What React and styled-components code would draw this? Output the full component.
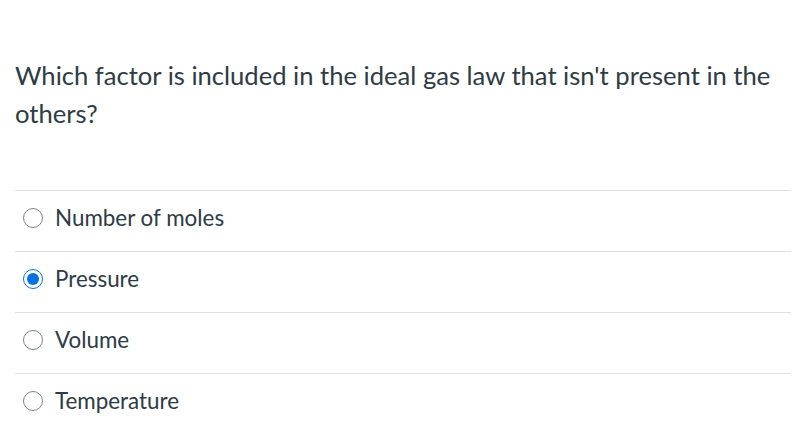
import React from "react";
import styled, { createGlobalStyle } from "styled-components";

const GlobalStyle = createGlobalStyle`
  body {
    margin: 0;
    background: #ffffff;
    font-family: Lato, "Noto Sans", sans-serif;
    color: #2d3b45;
  }
`;

const Page = styled.div`
  padding: 56px 12px 0 15px;
`;

const Question = styled.div`
  font-size: 25.6px;
  line-height: 38px;
  color: #2d3b45;
  padding-right: 10px;
  margin-bottom: 58px;
`;

const Answers = styled.div`
  display: flex;
  flex-direction: column;
`;

const Row = styled.label`
  box-sizing: border-box;
  display: flex;
  align-items: center;
  gap: 12px;
  height: 61px;
  padding: 0 0 8px 8px;
  border-top: 1px solid #dde0e2;
  font-size: 22.4px;
  color: #2d3b45;
`;

const Radio = styled.span`
  box-sizing: border-box;
  width: 20px;
  height: 20px;
  margin-top: 2px;
  border-radius: 50%;
  border: 1px solid ${props => (props.checked ? "#0770e3" : "#7a848c")};
  display: flex;
  align-items: center;
  justify-content: center;
  background: #fff;

  &::after {
    content: "";
    width: 12px;
    height: 12px;
    border-radius: 50%;
    background: ${props => (props.checked ? "#0770e3" : "transparent")};
  }
`;

const answers = ["Number of moles", "Pressure", "Volume", "Temperature"];

export default function App() {
  return (
    <Page>
      <GlobalStyle />
      <Question>
        Which factor is included in the ideal gas law that isn't present in the
        others?
      </Question>
      <Answers>
        {answers.map((a, i) => (
          <Row key={a}>
            <Radio checked={i === 1} />
            {a}
          </Row>
        ))}
      </Answers>
    </Page>
  );
}
